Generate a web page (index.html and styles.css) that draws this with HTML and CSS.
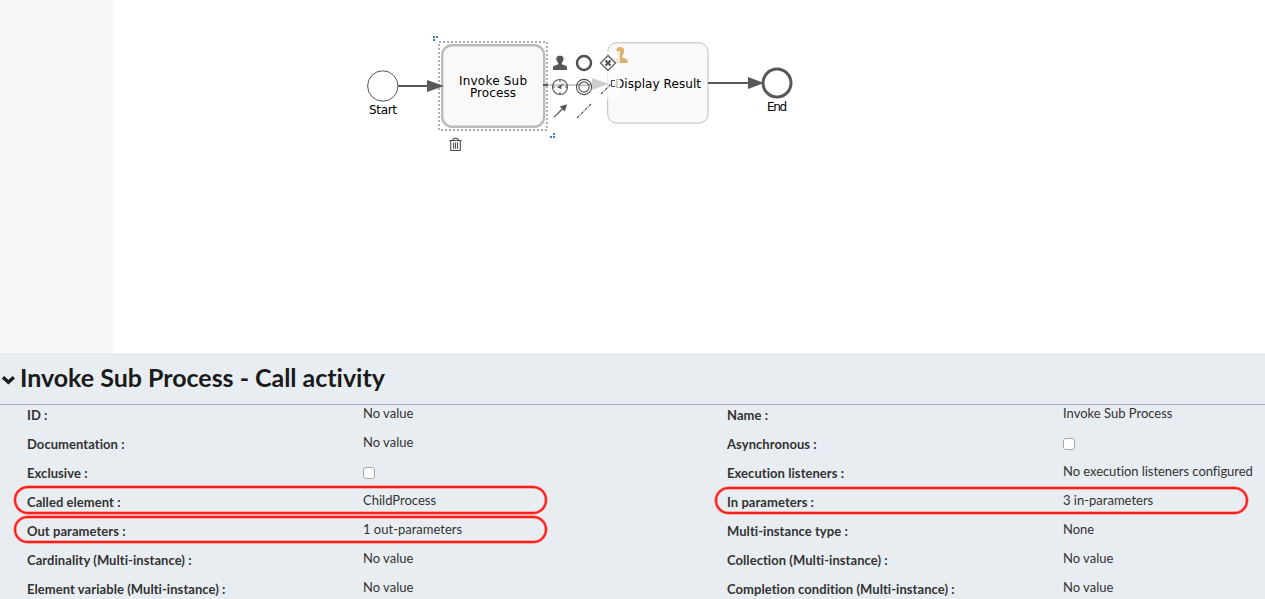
FILE: index.html
```html
<!DOCTYPE html>
<html lang="en">
<head>
<meta charset="utf-8">
<title>Invoke Sub Process - Call activity</title>
<link rel="stylesheet" href="styles.css">
</head>
<body>
<div class="editor">
  <main class="workspace">
    <aside class="palette"></aside>
    <svg class="canvas" viewBox="113 0 1152 353" width="1152" height="353">
      <!-- start event -->
      <circle class="start-event" cx="382.8" cy="86" r="15.2"/>
      <text class="label" x="383" y="114.4" textLength="28">Start</text>

      <!-- display result task -->
      <rect class="task" x="607.7" y="42.8" width="100.3" height="80.3" rx="9"/>
      <path class="user-badge" d="M614.4 63v-2.8c.4-1.7 2.7-2.2 4.2-2.8.5-.9.2-1.8-.5-2.5-1.4-2-2.2-4.4-1.2-6.3 1-2 5.6-2.2 6.9.1 1 2 .2 4.4-1 6.2-.7.7-.8 1.6-.3 2.5 1.5.6 4.7 1.1 5.2 2.8V63z"/>
      <text class="label" x="658" y="88" textLength="86">Display Result</text>

      <!-- end event -->
      <circle class="end-event" cx="777" cy="83" r="14"/>
      <text class="label" x="777" y="110.6" textLength="20">End</text>

      <!-- selected call activity -->
      <rect class="task selected" x="442.2" y="45.2" width="102" height="81.6" rx="10"/>
      <rect class="selection" x="439" y="42" width="108" height="88"/>
      <text class="label" x="493" y="85" textLength="68">Invoke Sub</text>
      <text class="label" x="493" y="97" textLength="46">Process</text>

      <!-- sequence flows -->
      <path class="flow" d="M398 86H430M543 85H595M708 83H750"/>
      <path class="arrowhead" d="M427 80l17 6-17 6zM592 78l17 6-17 6zM748 77l16 6-16 6z"/>
      <path class="resize" d="M433 36h2v2h-2zM436 36h2v2h-2zM433 39h2v2h-2zM553 133h2v2h-2zM550 136h2v2h-2zM553 136h2v2h-2z"/>

      <!-- quick menu -->
      <path class="veil" d="M548 51h72v48h-24v24h-48z"/>
      <g class="quick-solid">
        <path d="M553 70v-2.5c.3-1.8 2.7-2.4 5-3 .5-.8.3-1.5-.3-2.2-1.1-1.4-2-3.7-1-5.2 1.2-1.7 5.3-1.7 6.4 0 1 1.6.3 3.8-.8 5.2-.6.7-.7 1.4-.2 2.2 2.5.6 4.5 1.2 4.9 3v2.5z"/>
        <path d="M567 104.2l-2.2 7.3-2-2.1-8.7 8.3-.7-.7 8.5-8.5-2.2-2.1z"/>
        <path d="M564.7 83.3l-3.5 3.4.4 2.6-4.8-2.3 3-1.5z"/>
      </g>
      <g class="quick-line">
        <circle class="thick" cx="584" cy="63" r="7"/>
        <path d="M608 55.5l7.5 7.5-7.5 7.5-7.5-7.5z"/>
        <path class="cross" d="M605.5 60.5l5 5m0-5l-5 5"/>
        <circle cx="560" cy="87" r="7.5"/>
        <path d="M560 80v2m0 10v2m-7-7h2m10 0h2"/>
        <circle cx="584" cy="87" r="7.6"/>
        <circle cx="584" cy="87" r="5.1"/>
        <path class="association" d="M577 118l14-14"/>
        <path class="association" d="M601 94l9.5-9.5"/>
        <path d="M615 80.5h-3.5v6h3.5"/>
      </g>
      <g class="quick-line">
        <path d="M449.4 140.5h12.2M452.7 140.5c0-3 5.8-3 5.8 0M450.7 141v9.5h9.6V141M453.5 142.5v6.3M455.5 142.5v6.3M457.5 142.5v6.3"/>
      </g>
    </svg>
  </main>

  <section class="properties">
    <header class="properties-header">
      <svg class="chevron" viewBox="0 0 14 10" width="14" height="10"><path d="M2 2.3l5.4 5L12.8 2.3"/></svg>
      <h1>Invoke Sub Process - Call activity</h1>
    </header>
    <div class="columns">
      <dl class="fields">
        <div class="field"><dt>ID :</dt><dd>No value</dd></div>
        <div class="field"><dt>Documentation :</dt><dd>No value</dd></div>
        <div class="field"><dt>Exclusive :</dt><dd><span class="checkbox"></span></dd></div>
        <div class="field marked"><dt>Called element :</dt><dd>ChildProcess</dd></div>
        <div class="field marked second"><dt>Out parameters :</dt><dd>1 out-parameters</dd></div>
        <div class="field"><dt>Cardinality (Multi-instance) :</dt><dd>No value</dd></div>
        <div class="field"><dt>Element variable (Multi-instance) :</dt><dd>No value</dd></div>
      </dl>
      <dl class="fields">
        <div class="field"><dt>Name :</dt><dd>Invoke Sub Process</dd></div>
        <div class="field"><dt>Asynchronous :</dt><dd><span class="checkbox"></span></dd></div>
        <div class="field"><dt>Execution listeners :</dt><dd class="long">No execution listeners configured</dd></div>
        <div class="field marked right"><dt>In parameters :</dt><dd>3 in-parameters</dd></div>
        <div class="field"><dt>Multi-instance type :</dt><dd>None</dd></div>
        <div class="field"><dt>Collection (Multi-instance) :</dt><dd>No value</dd></div>
        <div class="field"><dt>Completion condition (Multi-instance) :</dt><dd>No value</dd></div>
      </dl>
    </div>
  </section>
</div>
</body>
</html>
```
FILE: styles.css
```css
*, *::before { box-sizing: border-box; }
body { margin: 0; background: #fff; font-family: Lato, sans-serif; color: #333; }
.editor { display: flex; flex-direction: column; height: 599px; overflow: hidden; }
.workspace { display: flex; flex: 0 0 353px; }
.palette { flex: 0 0 113px; background: #f8f8f8; }
.canvas { display: block; }

.label { font: 12px "DejaVu Sans", Verdana, sans-serif; fill: #000; text-anchor: middle; }
.start-event { fill: #fff; stroke: #585858; stroke-width: 1; }
.end-event { fill: #fff; stroke: #585858; stroke-width: 3; }
.task { fill: #f9f9f9; stroke: #bbb; stroke-width: 1; }
.task.selected { stroke-width: 2.4; }
.selection { fill: none; stroke: #aaa; stroke-width: 1.8; stroke-dasharray: 2 2; }
.user-badge { fill: #d9b171; }
.flow { fill: none; stroke: #585858; stroke-width: 2; }
.arrowhead { fill: #585858; }
.resize { fill: #3b7fb5; }
.veil { fill: #fff; fill-opacity: .7; }
.quick-solid { fill: #555; }
.quick-line { fill: none; stroke: #505050; stroke-width: 1.1; }
.thick { stroke-width: 2.4; }
.cross { stroke-width: 2; }
.association { stroke-dasharray: 3 .8 1 .8; }

.properties { flex: 1; background: #e8edf1; }
.properties-header { display: flex; align-items: center; height: 52px; padding: 0 0 3px 1px; border-bottom: 1px solid #9eacbd; }
.chevron { margin: 6px 5px 0 0; fill: none; stroke: #1a1a1a; stroke-width: 3.4; }
h1 { margin: 0; font-size: 25px; line-height: 30px; font-weight: 700; color: #1a1a1a; white-space: nowrap; letter-spacing: -.02px; font-variant-ligatures: none; }
.columns { display: grid; grid-template-columns: 700px 1fr; margin-top: -1px; }
.fields { margin: 0; padding: 0 0 0 27px; }
.field { position: relative; display: grid; grid-template-columns: 336px 1fr; height: 29px; font-size: 13px; line-height: 18px; white-space: nowrap; font-variant-ligatures: none; }
dt { padding-top: 2px; font-weight: 700; letter-spacing: .06px; }
dd { margin: 0; }
.long { letter-spacing: -.05px; }
.checkbox { display: block; width: 12px; height: 12px; margin-top: 5px; background: #fff; border: 1px solid #a8a8a8; border-radius: 3px; }
.marked::before { content: ""; position: absolute; left: -13px; top: -5px; width: 533px; height: 28px; border: 2px solid #fb1e1a; border-radius: 14px; box-shadow: 0 0 0 .5px #ff6a64, inset 0 0 0 .5px #ff6a64; }
.marked.second::before { top: -4px; height: 27px; }
.marked.right::before { left: -12px; top: -4px; height: 27px; }
```
